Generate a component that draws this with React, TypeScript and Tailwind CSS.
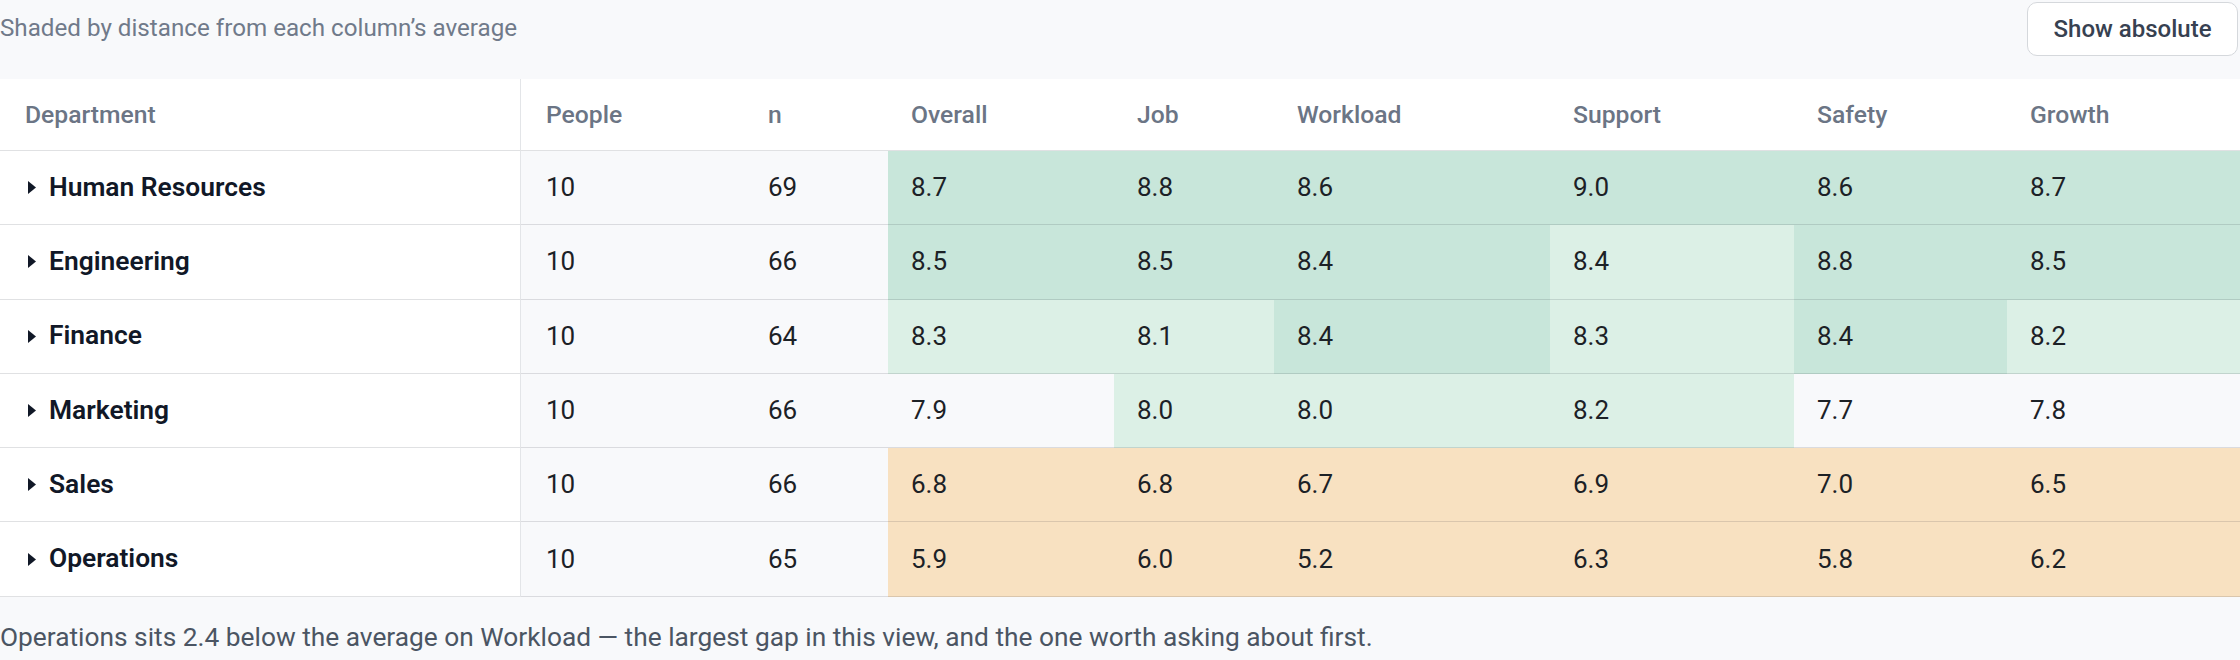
import React from 'react';

type Tone = 'hi' | 'mid' | 'none' | 'low';

interface Row {
  name: string;
  people: number;
  n: number;
  scores: [string, Tone][];
}

const columns = ['Overall', 'Job', 'Workload', 'Support', 'Safety', 'Growth'];

const rows: Row[] = [
  {
    name: 'Human Resources',
    people: 10,
    n: 69,
    scores: [['8.7', 'hi'], ['8.8', 'hi'], ['8.6', 'hi'], ['9.0', 'hi'], ['8.6', 'hi'], ['8.7', 'hi']],
  },
  {
    name: 'Engineering',
    people: 10,
    n: 66,
    scores: [['8.5', 'hi'], ['8.5', 'hi'], ['8.4', 'hi'], ['8.4', 'mid'], ['8.8', 'hi'], ['8.5', 'hi']],
  },
  {
    name: 'Finance',
    people: 10,
    n: 64,
    scores: [['8.3', 'mid'], ['8.1', 'mid'], ['8.4', 'hi'], ['8.3', 'mid'], ['8.4', 'hi'], ['8.2', 'mid']],
  },
  {
    name: 'Marketing',
    people: 10,
    n: 66,
    scores: [['7.9', 'none'], ['8.0', 'mid'], ['8.0', 'mid'], ['8.2', 'mid'], ['7.7', 'none'], ['7.8', 'none']],
  },
  {
    name: 'Sales',
    people: 10,
    n: 66,
    scores: [['6.8', 'low'], ['6.8', 'low'], ['6.7', 'low'], ['6.9', 'low'], ['7.0', 'low'], ['6.5', 'low']],
  },
  {
    name: 'Operations',
    people: 10,
    n: 65,
    scores: [['5.9', 'low'], ['6.0', 'low'], ['5.2', 'low'], ['6.3', 'low'], ['5.8', 'low'], ['6.2', 'low']],
  },
];

const toneClass: Record<Tone, string> = {
  hi: 'bg-[#c8e6da]',
  mid: 'bg-[#dcf0e6]',
  none: 'bg-[#f8f9fb]',
  low: 'bg-[#f8e1c1]',
};

const cellBorder = 'border-b border-[rgba(17,24,39,0.13)]';
const headCell = `h-[72px] flex items-center bg-white ${cellBorder} text-[24.7px] font-medium text-[#6b7585]`;

function Caret() {
  return (
    <svg width="8" height="13" viewBox="0 0 8 13" className="ml-[3px] shrink-0">
      <path d="M0 0 L8 6.5 L0 13 Z" fill="#111827" />
    </svg>
  );
}

export default function App() {
  return (
    <div
      className="w-[2240px] h-[660px] overflow-hidden bg-[#f8f9fb]"
      style={{ fontFamily: 'Roboto, "Liberation Sans", sans-serif' }}
    >
      <div className="h-[79px]">
        <div className="h-[56px] flex items-center justify-between">
          <span className="text-[24.2px] text-[#707a8a]">Shaded by distance from each column’s average</span>
          <button className="mr-[2px] mt-[1px] h-[54px] w-[211px] rounded-[10px] border-[1.5px] border-[#d5d8dc] bg-white text-[24px] font-medium text-[#374151]">
            Show absolute
          </button>
        </div>
      </div>

      <div className="grid grid-cols-[521px_224px_143px_226px_160px_276px_244px_213px_233px] text-[26px] text-[#1c2126]">
        {/* header */}
        <div className={`${headCell} pl-[25px] border-r border-r-[#e3e5e8]`}>Department</div>
        <div className={`${headCell} pl-[25px]`}>People</div>
        <div className={`${headCell} pl-[23px]`}>n</div>
        {columns.map((c) => (
          <div key={c} className={`${headCell} pl-[23px]`}>
            {c}
          </div>
        ))}

        {/* body */}
        {rows.map((r) => (
          <React.Fragment key={r.name}>
            <div className={`h-[74.3px] flex items-center gap-[13px] pl-[25px] bg-white border-r border-r-[#e3e5e8] ${cellBorder}`}>
              <Caret />
              <span className="text-[26.4px] font-semibold text-[#111827]">{r.name}</span>
            </div>
            <div className={`h-[74.3px] flex items-center pl-[25px] bg-[#f8f9fb] ${cellBorder}`}>{r.people}</div>
            <div className={`h-[74.3px] flex items-center pl-[23px] bg-[#f8f9fb] ${cellBorder}`}>{r.n}</div>
            {r.scores.map(([v, t], i) => (
              <div key={i} className={`h-[74.3px] flex items-center pl-[23px] ${toneClass[t]} ${cellBorder}`}>
                {v}
              </div>
            ))}
          </React.Fragment>
        ))}
      </div>

      <p className="pt-[26px] leading-[28px] text-[26.3px] text-[#4b5563]">
        Operations sits 2.4 below the average on Workload — the largest gap in this view, and the one worth asking about first.
      </p>
    </div>
  );
}
